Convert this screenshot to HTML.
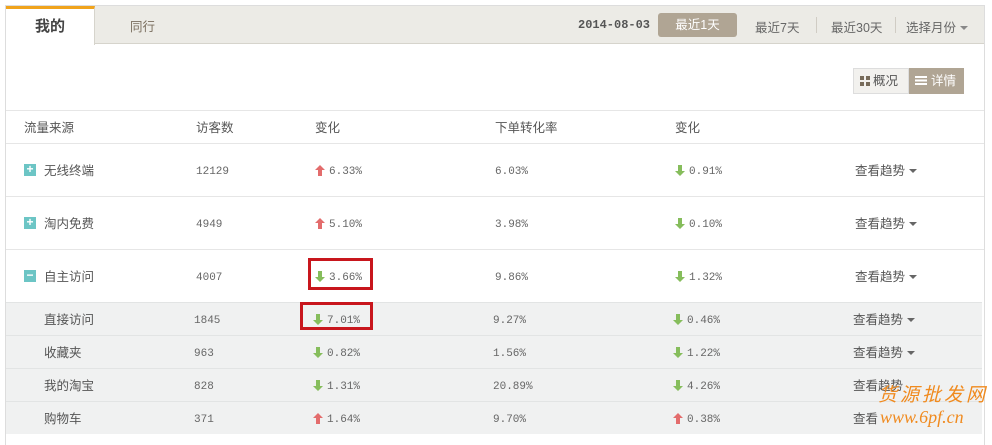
<!DOCTYPE html>
<html><head><meta charset="utf-8"><style>
*{margin:0;padding:0;box-sizing:border-box}
body{width:992px;height:437px;background:#fff;font-family:"Liberation Sans","Noto Sans CJK SC",sans-serif;font-size:12.5px;color:#555;position:relative;overflow:hidden}
.a{position:absolute}
.box{left:5px;top:5px;width:980px;height:440px;border:1px solid #ddd;border-bottom:none}
.head{left:6px;top:6px;width:978px;height:38px;background:#ecebe6;border-bottom:1px solid #d6d4cc}
.tab{left:6px;top:6px;width:89px;height:39px;background:#fff;border-top:3px solid #f0a31c;border-right:1px solid #d6d4cc;text-align:center;font-weight:bold;font-size:15px;color:#444;line-height:36px}
.num{font-family:"Liberation Mono","DejaVu Sans Mono",monospace;font-size:11px;color:#666;line-height:14px;height:14px;display:flex;align-items:flex-start}
.hl{left:6px;width:978px;height:1px;background:#e6e6e6}
.sub{left:6px;width:976px;height:33px;background:#f0f1f1;border-top:1px solid #e2e4e4}
.arr{display:block;width:10px;height:11px;margin-right:4px;flex:none}
.tri{display:inline-block;border-left:4px solid transparent;border-right:4px solid transparent;border-top:4px solid #666;vertical-align:2px;margin-left:4px}
.pm{width:12px;height:12px;background:#6cc5c5;color:#fff;font-size:12px;line-height:11px;text-align:center;font-weight:bold}
.red{border:3px solid #c8161d}
</style></head><body>
<div class="a box"></div>
<div class="a head"></div>
<div class="a tab">我的</div>
<div class="a" style="left:130px;top:16px;color:#7a6e5e">同行</div>
<div class="a num" style="left:578px;top:18px;font-weight:bold;font-size:12px;color:#555">2014-08-03</div>
<div class="a" style="left:658px;top:13px;width:79px;height:24px;background:#b0a594;border-radius:3px;color:#fff;text-align:center;line-height:24px">最近1天</div>
<div class="a" style="left:755px;top:17px;color:#666">最近7天</div>
<div class="a" style="left:816px;top:17px;width:1px;height:16px;background:#d0ccc4"></div>
<div class="a" style="left:831px;top:17px;color:#666">最近30天</div>
<div class="a" style="left:895px;top:17px;width:1px;height:16px;background:#d0ccc4"></div>
<div class="a" style="left:906px;top:17px;color:#666">选择月份<span class="tri" style="border-top-color:#888"></span></div>
<div class="a" style="left:853px;top:68px;width:56px;height:26px;background:#f2f1ee;border:1px solid #ddd;line-height:24px;padding-left:6px;color:#555"><span style="display:inline-block;width:10px;height:10px;background:linear-gradient(#f2f1ee,#f2f1ee) 4px 0/2px 10px no-repeat,linear-gradient(#f2f1ee,#f2f1ee) 0 4px/10px 2px no-repeat,#776b5a;vertical-align:-1px;margin-right:3px"></span>概况</div>
<div class="a" style="left:909px;top:68px;width:55px;height:26px;background:#b0a594;line-height:26px;padding-left:6px;color:#fff"><span style="display:inline-block;width:12px;height:9px;background:repeating-linear-gradient(#fff 0 2px,transparent 2px 3.5px);vertical-align:0;margin-right:4px"></span>详情</div>
<div class="a hl" style="top:110px"></div>
<div class="a" style="left:24px;top:117px">流量来源</div>
<div class="a" style="left:196px;top:117px">访客数</div>
<div class="a" style="left:315px;top:117px">变化</div>
<div class="a" style="left:495px;top:117px">下单转化率</div>
<div class="a" style="left:675px;top:117px">变化</div>
<div class="a hl" style="top:143px"></div>
<div class="a hl" style="top:196px"></div>
<div class="a hl" style="top:249px"></div>
<div class="a sub" style="top:302px"></div>
<div class="a sub" style="top:335px"></div>
<div class="a sub" style="top:368px"></div>
<div class="a sub" style="top:401px"></div>

<svg width="0" height="0" style="position:absolute"><defs>
<symbol id="u" viewBox="0 0 10 11"><path d="M5 0L10 5H7V11H3V5H0Z" fill="#e36c6c"/></symbol>
<symbol id="d" viewBox="0 0 10 11"><path d="M5 11L10 6H7V0H3V6H0Z" fill="#86bd5c"/></symbol>
</defs></svg>

<div class="a pm" style="left:24px;top:164px">+</div>
<div class="a" style="left:44px;top:160px">无线终端</div>
<div class="a num" style="left:196px;top:165px">12129</div>
<div class="a num" style="left:315px;top:165px"><svg class="arr"><use href="#u"/></svg>6.33%</div>
<div class="a num" style="left:495px;top:165px">6.03%</div>
<div class="a num" style="left:675px;top:165px"><svg class="arr"><use href="#d"/></svg>0.91%</div>
<div class="a" style="left:855px;top:160px">查看趋势<span class="tri"></span></div>

<div class="a pm" style="left:24px;top:217px">+</div>
<div class="a" style="left:44px;top:213px">淘内免费</div>
<div class="a num" style="left:196px;top:218px">4949</div>
<div class="a num" style="left:315px;top:218px"><svg class="arr"><use href="#u"/></svg>5.10%</div>
<div class="a num" style="left:495px;top:218px">3.98%</div>
<div class="a num" style="left:675px;top:218px"><svg class="arr"><use href="#d"/></svg>0.10%</div>
<div class="a" style="left:855px;top:213px">查看趋势<span class="tri"></span></div>

<div class="a pm" style="left:24px;top:270px">−</div>
<div class="a" style="left:44px;top:266px">自主访问</div>
<div class="a num" style="left:196px;top:271px">4007</div>
<div class="a num" style="left:315px;top:271px"><svg class="arr"><use href="#d"/></svg>3.66%</div>
<div class="a num" style="left:495px;top:271px">9.86%</div>
<div class="a num" style="left:675px;top:271px"><svg class="arr"><use href="#d"/></svg>1.32%</div>
<div class="a" style="left:855px;top:266px">查看趋势<span class="tri"></span></div>

<div class="a" style="left:44px;top:309px">直接访问</div>
<div class="a num" style="left:194px;top:314px">1845</div>
<div class="a num" style="left:313px;top:314px"><svg class="arr"><use href="#d"/></svg>7.01%</div>
<div class="a num" style="left:493px;top:314px">9.27%</div>
<div class="a num" style="left:673px;top:314px"><svg class="arr"><use href="#d"/></svg>0.46%</div>
<div class="a" style="left:853px;top:309px">查看趋势<span class="tri"></span></div>

<div class="a" style="left:44px;top:342px">收藏夹</div>
<div class="a num" style="left:194px;top:347px">963</div>
<div class="a num" style="left:313px;top:347px"><svg class="arr"><use href="#d"/></svg>0.82%</div>
<div class="a num" style="left:493px;top:347px">1.56%</div>
<div class="a num" style="left:673px;top:347px"><svg class="arr"><use href="#d"/></svg>1.22%</div>
<div class="a" style="left:853px;top:342px">查看趋势<span class="tri"></span></div>

<div class="a" style="left:44px;top:375px">我的淘宝</div>
<div class="a num" style="left:194px;top:380px">828</div>
<div class="a num" style="left:313px;top:380px"><svg class="arr"><use href="#d"/></svg>1.31%</div>
<div class="a num" style="left:493px;top:380px">20.89%</div>
<div class="a num" style="left:673px;top:380px"><svg class="arr"><use href="#d"/></svg>4.26%</div>
<div class="a" style="left:853px;top:375px">查看趋势</div>

<div class="a" style="left:44px;top:408px">购物车</div>
<div class="a num" style="left:194px;top:413px">371</div>
<div class="a num" style="left:313px;top:413px"><svg class="arr"><use href="#u"/></svg>1.64%</div>
<div class="a num" style="left:493px;top:413px">9.70%</div>
<div class="a num" style="left:673px;top:413px"><svg class="arr"><use href="#u"/></svg>0.38%</div>
<div class="a" style="left:853px;top:408px">查看</div>

<div class="a red" style="left:308px;top:258px;width:65px;height:32px"></div>
<div class="a red" style="left:300px;top:302px;width:73px;height:28px"></div>

<div class="a" style="left:878px;top:380px;color:#f08a1e;font-size:19px;font-style:italic;letter-spacing:3px">货源批发网</div>
<div class="a" style="left:880px;top:407px;color:#f08a1e;font-size:18px;font-style:italic;font-family:'Liberation Serif',serif">www.6pf.cn</div>
</body></html>
